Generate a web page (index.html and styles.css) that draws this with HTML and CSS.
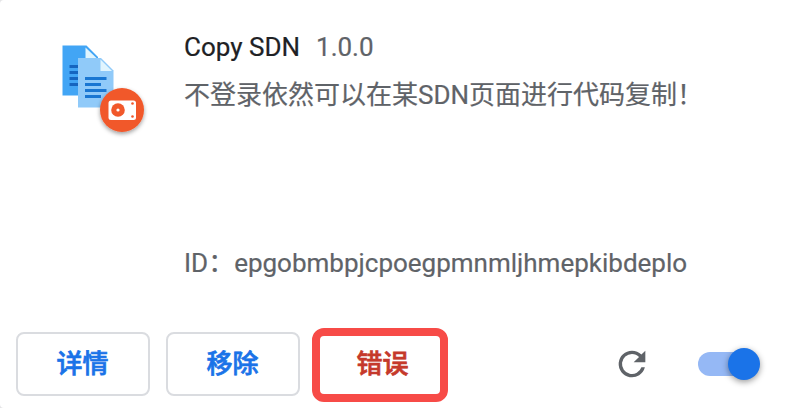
FILE: index.html
```html
<!DOCTYPE html>
<html lang="zh-CN">
<head>
<meta charset="utf-8">
<title>Copy SDN</title>
<link rel="stylesheet" href="styles.css">
</head>
<body>
<article class="card">
  <div class="main">
    <svg class="logo" width="100" height="110" viewBox="50 35 100 110">
      <defs>
        <filter id="shadow" x="-30%" y="-30%" width="160%" height="160%"><feDropShadow dx="0" dy="2" stdDeviation="2" flood-color="#000" flood-opacity=".38"/></filter>
      </defs>
      <path fill="#42a5f5" d="M62.500 45.500H86.500L98 57V95.500H62.500z"/>
      <path fill="#e1f5fe" d="M85.500 47.500V58H96.500z"/>
      <path stroke="#1565c0" stroke-width="3" d="M69.500 66.500H80M69.500 72.500H80M69.500 78.500H80M69.500 84.500H80"/>
      <path fill="#90caf9" d="M78 58H101L113.500 70.500V107.500H78z"/>
      <path fill="#e1f5fe" d="M100.500 59.500V71H112z"/>
      <path stroke="#1976d2" stroke-width="3" d="M85 78.500H106.500M85 84.500H101M85 90.500H106.500M85 96.500H101"/>
      <circle cx="122" cy="110" r="22" fill="#f1582b" filter="url(#shadow)"/>
      <rect x="108.500" y="100.500" width="27.500" height="19.500" rx="2.500" fill="#fff"/>
      <circle cx="118" cy="110" r="6.800" fill="#f1582b"/>
      <circle cx="118" cy="110" r="1.600" fill="#fff"/>
      <circle cx="132.500" cy="103.500" r="1.300" fill="#f1582b"/>
      <circle cx="132.500" cy="116.500" r="1.300" fill="#f1582b"/>
    </svg>
    <div class="content">
      <div class="heading"><span class="name">Copy SDN</span><span class="version">1.0.0</span></div>
      <div class="description">不登录依然可以在某SDN页面进行代码复制！</div>
      <div class="extension-id">ID：epgobmbpjcpoegpmnmljhmepkibdeplo</div>
    </div>
  </div>
  <div class="actions">
    <button class="button">详情</button>
    <button class="button">移除</button>
    <button class="button error">错误</button>
    <svg class="reload" width="40" height="40" viewBox="0 0 24 24"><path fill="#5f6368" d="M17.650 6.350A7.958 7.958 0 0 0 12 4a8 8 0 1 0 7.730 10h-2.080A6 6 0 1 1 12 6c1.660 0 3.140.690 4.220 1.780L13 11h7V4z"/></svg>
    <div class="toggle"><span class="knob"></span></div>
  </div>
</article>
</body>
</html>
```
FILE: styles.css
```css
*, *::after { box-sizing: border-box; }
body {
  margin: 0;
  background: #e4e4e6;
  font-family: Roboto, "Noto Sans CJK SC", sans-serif;
  font-size: 26px;
  color: #5f6368;
  -webkit-text-stroke: .2px currentColor;
}
.card {
  height: 408px;
  background: #fff;
  border-radius: 4px 0 0 4px;
  overflow: hidden;
}
.main { display: flex; height: 332px; padding: 27px 0 0 50px; }
.logo { flex: none; margin-top: 8px; }
.content {
  display: flex;
  flex-direction: column;
  margin-left: 34px;
  white-space: nowrap;
}
.heading { display: flex; gap: 16px; height: 40px; line-height: 40px; }
.name { color: #202124; }
.description { height: 40px; margin-top: 8px; line-height: 40px; }
.extension-id { height: 40px; margin-top: 128px; line-height: 40px; }
.actions { display: flex; align-items: center; gap: 16px; height: 64px; padding-left: 16px; }
.button {
  width: 134px;
  height: 64px;
  padding: 0 1px 5px 0;
  border: 2px solid #dadce0;
  border-radius: 8px;
  background: #fff;
  color: #1a73e8;
  font: 500 26px Roboto, "Noto Sans CJK SC", sans-serif;
  -webkit-text-stroke: .7px currentColor;
}
.error { position: relative; border-color: transparent; color: #c5392b; }
.error::after {
  content: "";
  position: absolute;
  left: -6px;
  top: -6px;
  width: 136px;
  height: 74px;
  border: 8px solid #f74b47;
  border-radius: 12px;
}
.reload { margin-left: 146px; }
.toggle {
  position: relative;
  width: 56px;
  height: 24px;
  margin-left: 30px;
  border-radius: 12px;
  background: #95b8f5;
}
.knob {
  position: absolute;
  right: -6px;
  top: -4px;
  width: 32px;
  height: 32px;
  border-radius: 50%;
  background: #1a73e8;
  box-shadow: 0 2px 6px rgba(0, 0, 0, .4);
}
```
